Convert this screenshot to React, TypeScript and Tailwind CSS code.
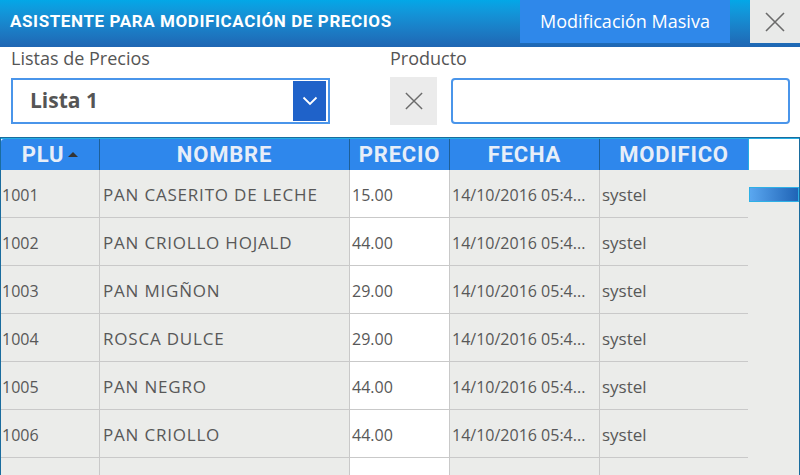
import React from "react";

type Row = { plu: string; nombre: string; precio: string; fecha: string; modifico: string };

const rows: Row[] = [
  { plu: "1001", nombre: "PAN CASERITO DE LECHE", precio: "15.00", fecha: "14/10/2016 05:4...", modifico: "systel" },
  { plu: "1002", nombre: "PAN CRIOLLO HOJALD", precio: "44.00", fecha: "14/10/2016 05:4...", modifico: "systel" },
  { plu: "1003", nombre: "PAN MIGÑON", precio: "29.00", fecha: "14/10/2016 05:4...", modifico: "systel" },
  { plu: "1004", nombre: "ROSCA DULCE", precio: "29.00", fecha: "14/10/2016 05:4...", modifico: "systel" },
  { plu: "1005", nombre: "PAN NEGRO", precio: "44.00", fecha: "14/10/2016 05:4...", modifico: "systel" },
  { plu: "1006", nombre: "PAN CRIOLLO", precio: "44.00", fecha: "14/10/2016 05:4...", modifico: "systel" },
  { plu: "", nombre: "", precio: "", fecha: "", modifico: "" },
];

const segoe = { fontFamily: '"Open Sans", "Noto Sans", sans-serif' };
const roboto = { fontFamily: 'Roboto, "Liberation Sans", sans-serif' };

function CloseIcon({ size = 20, color = "#6b6b6b" }: { size?: number; color?: string }) {
  return (
    <svg width={size} height={size} viewBox="0 0 20 20">
      <path d="M1 1 L19 19 M19 1 L1 19" stroke={color} strokeWidth="1.6" fill="none" />
    </svg>
  );
}

function HeaderCell({ children, w }: { children: React.ReactNode; w: string }) {
  return (
    <div
      className={`${w} h-full flex items-center justify-center border-r border-[#1d5f98] text-[22px] tracking-[0.8px] font-bold text-[#e7eef8]`}
      style={roboto}
    >
      {children}
    </div>
  );
}

export default function App() {
  return (
    <div className="w-[800px] h-[475px] overflow-hidden bg-white flex flex-col" style={segoe}>
      {/* title bar */}
      <div className="h-[47px] shrink-0 flex items-start bg-gradient-to-b from-[#03a7e7] to-[#1f66b3]">
        <div
          className="flex-1 h-[43px] flex items-center pl-[10px] text-white font-bold text-[17px] tracking-[0.6px]"
          style={roboto}
        >
          ASISTENTE PARA MODIFICACIÓN DE PRECIOS
        </div>
        <button className="w-[210px] h-[43px] bg-[#2f88ea] text-white text-[18px] flex items-center justify-center">
          Modificación Masiva
        </button>
        <div className="w-[20px]" />
        <button className="w-[50px] h-[43px] bg-[#e9eae9] flex items-center justify-center">
          <CloseIcon size={20} />
        </button>
      </div>

      {/* filters */}
      <div className="h-[90px] shrink-0 flex">
        <div className="ml-[11px] w-[319px] flex flex-col">
          <div className="h-[22px] text-[18px] text-[#555] leading-[22px]">Listas de Precios</div>
          <div className="mt-[9px] h-[46px] border-2 border-[#4a95ea] bg-white flex items-center justify-between pl-[17px] pr-[2px]">
            <span className="text-[21px] font-bold text-[#555]">Lista 1</span>
            <div className="w-[33px] h-[40px] bg-[#1f62c9] flex items-center justify-center">
              <svg width="16" height="10" viewBox="0 0 16 10">
                <path d="M1.5 1.5 L8 8 L14.5 1.5" stroke="white" strokeWidth="1.8" fill="none" />
              </svg>
            </div>
          </div>
        </div>
        <div className="ml-[60px] flex flex-col">
          <div className="h-[22px] text-[18px] text-[#555] leading-[22px]">Producto</div>
          <div className="mt-[8px] flex items-start gap-[14px]">
            <button className="w-[47px] h-[48px] bg-[#ebebeb] flex items-center justify-center">
              <CloseIcon size={18} />
            </button>
            <div className="mt-[1px] w-[339px] h-[46px] rounded-[4px] border-2 border-[#4a95ea] bg-white" />
          </div>
        </div>
      </div>

      {/* table */}
      <div className="flex-1 border-t border-l border-r border-[#1a6c9e] flex flex-col relative">
        <div className="h-[32px] shrink-0 flex border-t border-[#25aee3]">
          <div className="w-[747px] flex bg-[#2e87ec] rounded-tl-[3px]">
            <HeaderCell w="w-[99px]">
              <span>PLU</span>
              <svg width="10" height="6" viewBox="0 0 10 6" className="ml-[4px] mb-[2px]">
                <path d="M0 6 L5 1 L10 6 Z" fill="#333" />
              </svg>
            </HeaderCell>
            <HeaderCell w="w-[250px]">NOMBRE</HeaderCell>
            <HeaderCell w="w-[100px]">PRECIO</HeaderCell>
            <HeaderCell w="w-[150px]">FECHA</HeaderCell>
            <HeaderCell w="w-[148px] border-r-0">MODIFICO</HeaderCell>
          </div>
          <div className="flex-1 bg-white border-l border-[#25aee3]" />
        </div>
        <div className="flex-1 flex bg-[#ebecea] overflow-hidden">
          <div className="w-[747px] flex flex-col">
            {rows.map((r, i) => (
              <div key={i} className="h-[48px] shrink-0 flex border-b border-[#c9c9c9] text-[16px] text-[#585858]">
                <div className="w-[99px] flex items-center pt-[3px] pl-[1px] border-r border-[#c9c9c9]">{r.plu}</div>
                <div className="w-[250px] flex items-center pt-[3px] pl-[3px] border-r border-[#c9c9c9] text-[17px] tracking-[0.8px]">
                  {r.nombre}
                </div>
                <div className="w-[100px] flex items-center pt-[3px] pl-[2px] border-r border-[#c9c9c9] bg-white">{r.precio}</div>
                <div className="w-[150px] flex items-center pt-[3px] pl-[2px] border-r border-[#c9c9c9] whitespace-nowrap overflow-hidden">
                  {r.fecha}
                </div>
                <div className="w-[148px] flex items-center pt-[3px] pl-[2px] text-[17px]">{r.modifico}</div>
              </div>
            ))}
          </div>
          <div className="flex-1" />
        </div>
        {/* scroll thumb */}
        <div className="absolute right-0 top-[49px] w-[50px] h-[15px] border border-[#2eb0e6] bg-gradient-to-r from-[#5aa7f0] to-[#1f64b6]" />
      </div>
    </div>
  );
}
